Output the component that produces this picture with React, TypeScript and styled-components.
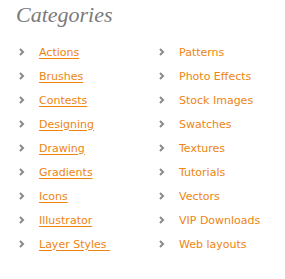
import React from "react";
import styled, { createGlobalStyle } from "styled-components";

const Global = createGlobalStyle`
  html, body { margin: 0; padding: 0; background: #fff; }
  body { width: 285px; height: 279px; overflow: hidden; }
`;

const Panel = styled.section`
  padding: 1px 0 0 16px;
`;

const Title = styled.h2`
  margin: 0;
  font-family: "Liberation Serif", "Times New Roman", serif;
  font-style: italic;
  font-weight: normal;
  font-size: 22px;
  line-height: 28px;
  color: #7a7a7a;
`;

const Grid = styled.ul`
  list-style: none;
  margin: 11px 0 0 0;
  padding: 0 0 0 3px;
  display: grid;
  grid-template-columns: 140px 120px;
  grid-auto-flow: column;
  grid-template-rows: repeat(9, 24px);
`;

const Item = styled.li`
  display: flex;
  align-items: center;
  gap: 14px;
  height: 24px;
`;

const Arrow = styled.svg`
  width: 6px;
  height: 8px;
  flex: none;
`;

const Link = styled.a<{ $underline: boolean }>`
  font-family: "DejaVu Sans", sans-serif;
  font-size: 11px;
  color: #ee8510;
  text-decoration: ${(p) => (p.$underline ? "underline" : "none")};
  text-underline-offset: 2px;
  white-space: pre;
`;

const left = ["Actions", "Brushes", "Contests", "Designing", "Drawing", "Gradients", "Icons", "Illustrator", "Layer Styles "];
const right = ["Patterns", "Photo Effects", "Stock Images", "Swatches", "Textures", "Tutorials", "Vectors", "VIP Downloads", "Web layouts"];

const Chevron = () => (
  <Arrow viewBox="0 0 6 8">
    <path d="M1 1 L4 4 L1 7" stroke="#8a8a8a" strokeWidth="2" fill="none" />
  </Arrow>
);

export default function App() {
  return (
    <>
      <Global />
      <Panel>
        <Title>Categories</Title>
        <Grid>
          {left.map((t) => (
            <Item key={t}>
              <Chevron />
              <Link href="#" $underline>{t}</Link>
            </Item>
          ))}
          {right.map((t) => (
            <Item key={t}>
              <Chevron />
              <Link href="#" $underline={false}>{t}</Link>
            </Item>
          ))}
        </Grid>
      </Panel>
    </>
  );
}
